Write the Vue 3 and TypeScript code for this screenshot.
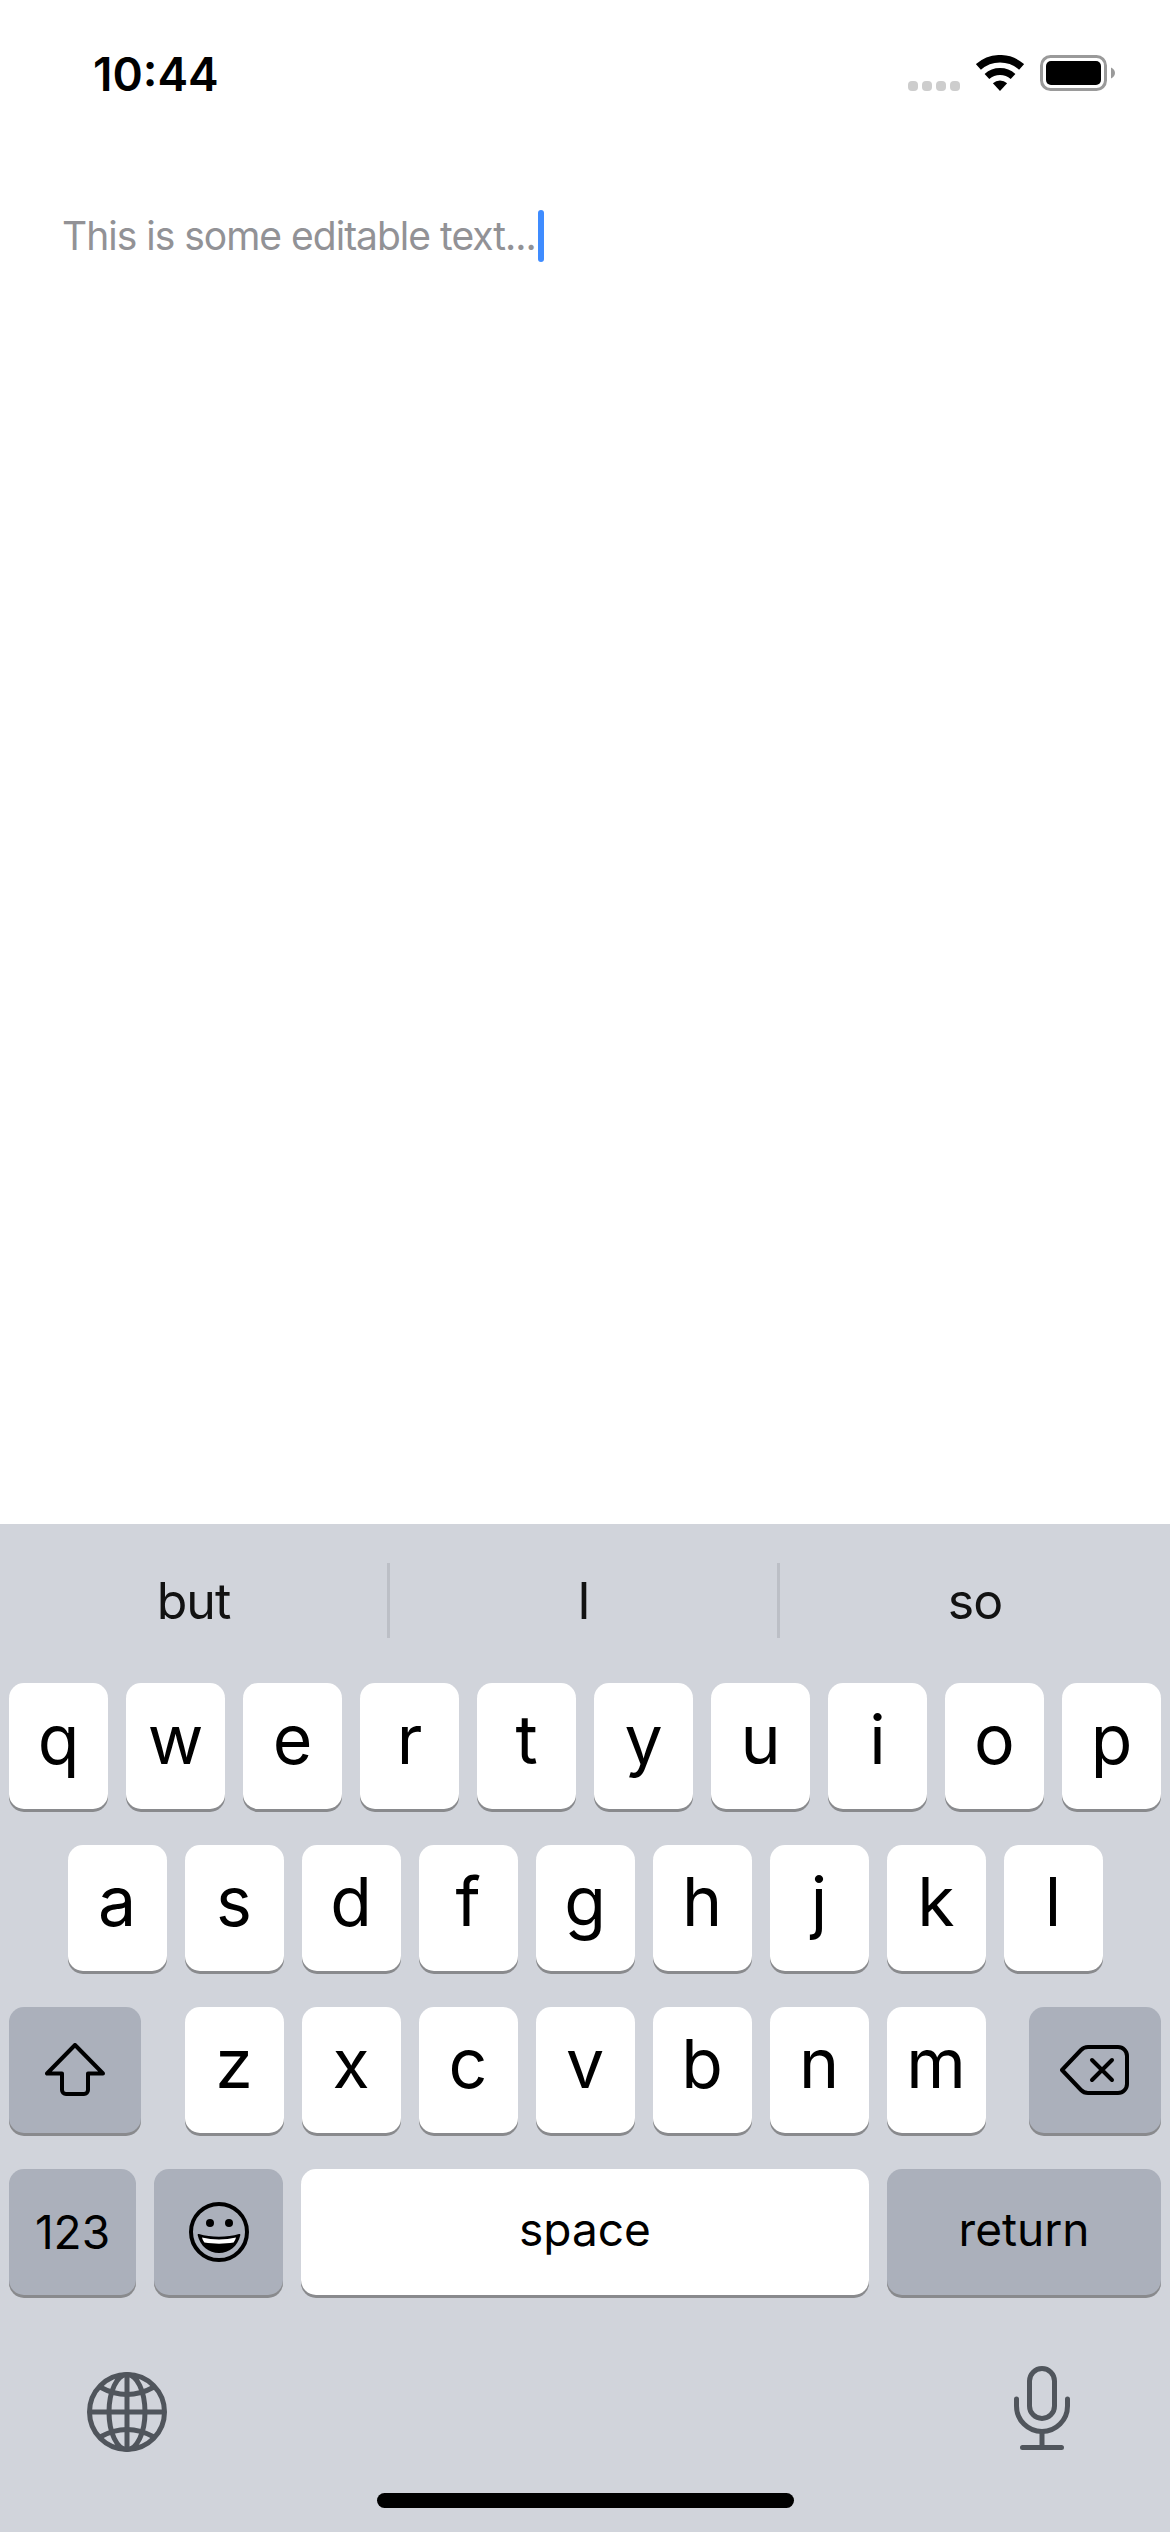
<script setup lang="ts">
const rowOne = ['q', 'w', 'e', 'r', 't', 'y', 'u', 'i', 'o', 'p']
const rowTwo = ['a', 's', 'd', 'f', 'g', 'h', 'j', 'k', 'l']
const rowThree = ['z', 'x', 'c', 'v', 'b', 'n', 'm']
const suggestions = ['but', 'I', 'so']
</script>

<template>
  <div class="phone">
    <div class="status-bar">
      <span class="time">10:44</span>
      <div class="status-icons">
        <div class="signal">
          <i v-for="n in 4" :key="n"></i>
        </div>
        <svg class="wifi" width="48" height="36" viewBox="0 0 48 36">
          <path d="M2.400 12A32.300 32.300 0 0 1 45.600 12" fill="none" stroke="#000" stroke-width="7.500" />
          <path d="M10.950 21.500A19.500 19.500 0 0 1 37.050 21.500" fill="none" stroke="#000" stroke-width="7" />
          <path d="M24 36L16.900 28.200A10.500 10.500 0 0 1 31.100 28.200z" />
        </svg>
        <svg class="battery" width="75" height="36" viewBox="0 0 75 36">
          <rect x="1.500" y="1.500" width="64" height="33" rx="9" fill="none" stroke="#9a9a9a" stroke-width="3" />
          <rect x="6" y="6" width="55" height="24" rx="5" />
          <path d="M71 12.500c2.400 1 4 3 4 5.500s-1.600 4.500-4 5.500z" fill="#9a9a9a" />
        </svg>
      </div>
    </div>

    <div class="editor">
      <span class="editable">This is some editable text...</span><span class="cursor"></span>
    </div>

    <div class="keyboard">
      <div class="suggestions">
        <div v-for="word in suggestions" :key="word" class="suggestion">{{ word }}</div>
      </div>

      <div class="keys">
        <div class="row">
          <div v-for="k in rowOne" :key="k" class="key letter">{{ k }}</div>
        </div>
        <div class="row">
          <div v-for="k in rowTwo" :key="k" class="key letter">{{ k }}</div>
        </div>
        <div class="row row-three">
          <div class="key special wide">
            <svg width="60" height="54" viewBox="0 0 60 54" fill="none" stroke="#000" stroke-width="4" stroke-linejoin="round">
              <path d="M30 2L2 30.500H17V47a4 4 0 0 0 4 4H39a4 4 0 0 0 4-4V30.500H58z" />
            </svg>
          </div>
          <div class="letters">
            <div v-for="k in rowThree" :key="k" class="key letter">{{ k }}</div>
          </div>
          <div class="key special wide">
            <svg width="70" height="50" viewBox="0 0 70 50" fill="none" stroke="#000" stroke-width="4" stroke-linecap="round" stroke-linejoin="round">
              <path d="M2 25L21 5a10 10 0 0 1 7-3H58a9 9 0 0 1 9 9V39a9 9 0 0 1-9 9H28a10 10 0 0 1-7-3z" />
              <path d="M32 15L52 35M52 15L32 35" />
            </svg>
          </div>
        </div>
        <div class="row">
          <div class="key special numbers">123</div>
          <div class="key special emoji">
            <svg width="60" height="60" viewBox="0 0 60 60">
              <circle cx="30" cy="30" r="28" fill="none" stroke="#000" stroke-width="4" />
              <circle cx="21" cy="21" r="4" />
              <circle cx="40" cy="21" r="4" />
              <path d="M10 32c12 3.500 28 3.500 40 0c1-.3 1.500.3 1.300 1.200C49 44 40 51 30 51S11 44 8.700 33.200C8.500 32.300 9 31.700 10 32z" fill="#000" />
              <path d="M13 35.500c11 2.500 23 2.500 34 0c-.6 2-1.300 3.500-2.400 5c-9 1.500-20 1.500-29.200 0c-1.100-1.500-1.800-3-2.400-5z" fill="#fff" />
            </svg>
          </div>
          <div class="key space">space</div>
          <div class="key special return">return</div>
        </div>
      </div>

      <div class="bottom-icons">
        <svg class="globe" width="80" height="80" viewBox="0 0 80 80" fill="none" stroke="#50555c" stroke-width="5">
          <circle cx="40" cy="40" r="37.500" />
          <ellipse cx="40" cy="40" rx="18" ry="37.500" />
          <path d="M40 3V77M3 40H77" />
          <path d="M13 15Q40 30 67 15M13 65Q40 50 67 65" />
        </svg>
        <svg width="56" height="84" viewBox="0 0 56 84" fill="none" stroke="#50555c" stroke-width="5" stroke-linecap="round">
          <rect x="15.500" y="2.500" width="25" height="50" rx="12.500" />
          <path d="M2.500 33V40a25.500 25.500 0 0 0 51 0V33" />
          <path d="M28 66V81M8.500 81.500H47.500" />
        </svg>
      </div>

      <div class="home-indicator"></div>
    </div>
  </div>
</template>

<style scoped>
.phone {
  width: 1170px;
  height: 2532px;
  display: flex;
  flex-direction: column;
  background: #fff;
  font-family: Inter, "Liberation Sans", sans-serif;
  overflow: hidden;
}

.status-bar {
  display: flex;
  justify-content: space-between;
  align-items: flex-start;
  padding: 46px 55px 0 93px;
  height: 132px;
  box-sizing: border-box;
}

.time {
  font-size: 46px;
  font-weight: 600;
  line-height: 56px;
  color: #000;
}

.status-icons {
  display: flex;
  align-items: flex-end;
  padding-top: 9px;
}

.signal {
  display: flex;
  gap: 4px;
  margin-right: 16px;
}

.signal i {
  width: 10px;
  height: 10px;
  border-radius: 4px;
  background: #cdcdcd;
}

.wifi {
  margin-right: 16px;
}

.editor {
  flex: 1;
  display: flex;
  align-items: flex-start;
  padding: 78px 0 0 62px;
}

.editable {
  font-size: 39px;
  letter-spacing: -1px;
  line-height: 52px;
  color: #929296;
}

.cursor {
  width: 6px;
  height: 52px;
  margin-left: 2px;
  border-radius: 3px;
  background: #3f8cff;
}

.keyboard {
  height: 1008px;
  position: relative;
  background: #d1d4db;
}

.suggestions {
  display: flex;
  padding-top: 39px;
  height: 75px;
}

.suggestion {
  width: 390px;
  display: flex;
  align-items: center;
  justify-content: center;
  font-size: 50px;
  letter-spacing: -1px;
  color: #121212;
  border-right: 3px solid #bcbfc6;
  box-sizing: border-box;
}

.suggestion:last-child {
  border-right: none;
}

.keys {
  display: flex;
  flex-direction: column;
  gap: 36px;
  padding: 45px 9px 0;
}

.row {
  display: flex;
  justify-content: center;
  gap: 18px;
}

.row-three {
  justify-content: space-between;
}

.letters {
  display: flex;
  gap: 18px;
}

.key {
  height: 126px;
  display: flex;
  align-items: center;
  justify-content: center;
  border-radius: 15px;
  background: #fff;
  color: #000;
  box-shadow: 0 3px 0 #898a8d;
}

.letter {
  width: 99px;
  font-size: 68px;
  padding-bottom: 15px;
  box-sizing: border-box;
}

.special {
  background: #abb0bb;
}

.wide {
  width: 132px;
}

.numbers {
  width: 127px;
  font-size: 46px;
}

.emoji {
  width: 129px;
}

.space {
  flex: 1;
  font-size: 46px;
  padding-bottom: 7px;
  box-sizing: border-box;
}

.return {
  width: 274px;
  font-size: 46px;
  padding-bottom: 7px;
  box-sizing: border-box;
}

.bottom-icons {
  display: flex;
  justify-content: space-between;
  align-items: flex-start;
  padding: 71px 100px 0 87px;
}

.globe {
  margin-top: 6px;
}

.home-indicator {
  position: absolute;
  left: 377px;
  bottom: 24px;
  width: 417px;
  height: 15px;
  border-radius: 8px;
  background: #000;
}
</style>

<style>
html,
body {
  margin: 0;
  background: #fff;
}
</style>
